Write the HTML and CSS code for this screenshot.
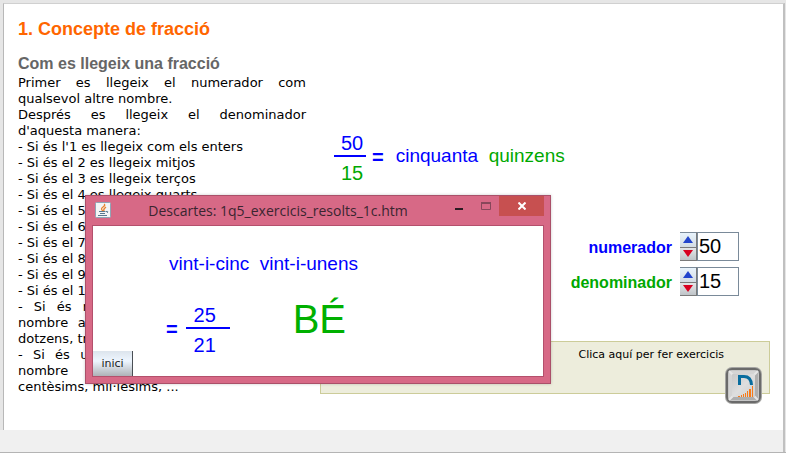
FILE: index.html
```html
<!DOCTYPE html>
<html lang="ca">
<head>
<meta charset="utf-8">
<title>Concepte de fracció</title>
<link rel="stylesheet" href="styles.css">
</head>
<body>
<div class="page">
  <main class="lesson">
    <article class="theory">
      <h1>1. Concepte de fracció</h1>
      <h2>Com es llegeix una fracció</h2>
      <p>Primer es llegeix el numerador com qualsevol altre nombre.</p>
      <p>Després es llegeix el denominador d'aquesta manera:</p>
      <p>- Si és l'1 es llegeix com els enters</p>
      <p>- Si és el 2 es llegeix mitjos</p>
      <p>- Si és el 3 es llegeix terços</p>
      <p>- Si és el 4 es llegeix quarts</p>
      <p>- Si és el 5 es llegeix cinquens</p>
      <p>- Si és el 6 es llegeix sisens</p>
      <p>- Si és el 7 es llegeix setens</p>
      <p>- Si és el 8 es llegeix vuitens</p>
      <p>- Si és el 9 es llegeix novens</p>
      <p>- Si és el 10 es llegeix desens</p>
      <p><span class="line">- Si és més major que 10, es diu el</span> <span class="line">nombre acabat amb «-ens»: els onzens,</span> dotzens, tretzens, ...</p>
      <p><span class="line">- Si és una potència de 10, es diu el</span> <span class="line">nombre acabat en -èsims:</span> centèsims, mil·lèsims, ...</p>
    </article>

    <section class="practice">
      <div class="reading">
        <div class="fraction">
          <span class="num blue">50</span>
          <span class="den green">15</span>
        </div>
        <span class="equals">=</span>
        <span class="words"><span class="blue">cinquanta</span>&nbsp; <span class="green">quinzens</span></span>
      </div>

      <form class="controls">
        <label class="blue" for="numerador">numerador</label>
        <div class="spinner">
          <div class="arrows">
            <button type="button" aria-label="Augmenta el numerador"><svg width="10" height="7" viewBox="0 0 10 7"><path d="M5 0L10 7H0z" fill="#2244cc"/></svg></button>
            <button type="button" aria-label="Disminueix el numerador"><svg width="10" height="7" viewBox="0 0 10 7"><path d="M0 0H10L5 7z" fill="#d80020"/></svg></button>
          </div>
          <input id="numerador" type="text" value="50">
        </div>
        <label class="green" for="denominador">denominador</label>
        <div class="spinner">
          <div class="arrows">
            <button type="button" aria-label="Augmenta el denominador"><svg width="10" height="7" viewBox="0 0 10 7"><path d="M5 0L10 7H0z" fill="#2244cc"/></svg></button>
            <button type="button" aria-label="Disminueix el denominador"><svg width="10" height="7" viewBox="0 0 10 7"><path d="M0 0H10L5 7z" fill="#d80020"/></svg></button>
          </div>
          <input id="denominador" type="text" value="15">
        </div>
      </form>

      <div class="exercises">
        <span id="exercises-text">Clica aquí per fer exercicis</span>
        <button class="launch" type="button" aria-labelledby="exercises-text">
          <svg width="39" height="39" viewBox="0 0 39 39">
            <defs>
              <linearGradient id="face" x1="0" y1="0" x2="1" y2="1"><stop offset="0" stop-color="#c8c8c8"/><stop offset=".5" stop-color="#dedede"/><stop offset="1" stop-color="#cfcfcf"/></linearGradient>
            </defs>
            <rect x="1" y="1" width="37" height="37" rx="7" fill="#a5a5a3"/>
            <rect x="3" y="3" width="33" height="33" rx="5" fill="#c6c6c6" stroke="#6a6a6a" stroke-width="2"/>
            <path d="M5 5H34L31 8H8V31L5 34z" fill="#d4d4d4"/>
            <path d="M34 5V34H5L8 31H31V8z" fill="#aeaeae"/>
            <path d="M5 5L9 9M34 5L30 9M5 34L9 30M34 34L30 30" stroke="#e6e6e6" stroke-width="2"/>
            <rect x="8" y="8" width="23" height="23" rx="1" fill="url(#face)"/>
            <path d="M15.500 19V10.500H20Q27 10.500 27.500 19" fill="none" stroke="#086c9e" stroke-width="3"/>
            <path d="M14 31V30H16V31zM17 31V29H18V31zM19 31V28H20V31zM21 31V27H22V31zM23 31V25H24V31zM25 31V23H27V31zM28 31V20H29V31z" fill="#f77a18"/>
          </svg>
        </button>
      </div>
    </section>
  </main>
  <footer class="status"></footer>

  <section class="dialog" role="dialog" aria-labelledby="dialog-title">
    <header class="titlebar">
      <svg class="java" width="16" height="16" viewBox="0 0 16 16">
        <rect x=".5" y=".5" width="15" height="15" rx="1" fill="#f3f5f6" stroke="#8fa5b5"/>
        <path d="M8 9Q5 7 8 5T9 2M9 9Q8 7 11 5" fill="none" stroke="#e9822d" stroke-width="1.3"/>
        <path d="M4 9.500H10.500M5 11.500H10M3 13.500H12M11 9.500Q14 9 12 11" fill="none" stroke="#59788e"/>
      </svg>
      <span id="dialog-title" class="title">Descartes: 1q5_exercicis_resolts_1c.htm</span>
      <div class="window-buttons">
        <button type="button" aria-label="Minimitza"><svg width="10" height="10" viewBox="0 0 10 10"><path d="M1 7H9V9H1z" fill="#2b1b22"/></svg></button>
        <button type="button" aria-label="Maximitza"><svg width="10" height="8" viewBox="0 0 10 8"><path d="M.5 1H9.500V7.500H.5z" fill="none" stroke="#87475a"/><path d="M0 0H10V2H0z" fill="#87475a"/></svg></button>
        <button class="close" type="button" aria-label="Tanca"><svg width="8" height="8" viewBox="0 0 8 8"><path d="M.5 .5L7.500 7.500M7.500 .5L.5 7.500" stroke="#fff" stroke-width="2"/></svg></button>
      </div>
    </header>
    <div class="canvas">
      <p class="answer blue">vint-i-cinc&nbsp; vint-i-unens</p>
      <div class="result">
        <span class="equals">=</span>
        <div class="fraction wide blue">
          <span class="num">25</span>
          <span class="den">21</span>
        </div>
        <strong class="verdict">BÉ</strong>
      </div>
      <button class="start" type="button">inici</button>
    </div>
  </section>
</div>
</body>
</html>
```
FILE: styles.css
```css
* { box-sizing: border-box; }

body {
  margin: 0;
  background: #e6e6e6;
  color: #000;
  font-family: "DejaVu Sans", Verdana, sans-serif;
  font-size: 13px;
  line-height: 16px;
}

h1, h2, p { margin: 0; }

button {
  padding: 0;
  border: 0;
  font: inherit;
  color: inherit;
}

svg { display: block; }

.blue { color: #0000ff; }
.green { color: #00a800; }

.page {
  position: relative;
  display: flex;
  flex-direction: column;
  min-height: 100vh;
  border-bottom: 1px solid #b4b4b4;
}

.lesson {
  flex: 1;
  display: grid;
  grid-template-columns: 288px 1fr;
  gap: 14px;
  margin: 3px 1px 0 3px;
  padding: 14px 13px 35px 14px;
  background: #fff;
  border-top: 1px solid #d0d0d0;
  border-left: 1px solid #b8b8b8;
  border-right: 2px solid #c0c0c0;
}

.status {
  height: 22px;
  margin-right: 1px;
  background: #f0f0f0;
  border-right: 2px solid #c0c0c0;
}

.theory { text-align: justify; }

h1, h2 {
  font-family: "Liberation Sans", Arial, sans-serif;
  font-weight: bold;
  text-align: left;
  white-space: nowrap;
}

h1 {
  margin-bottom: 15px;
  color: #ff6600;
  font-size: 18px;
  line-height: 22px;
}

h2 {
  margin-bottom: 2px;
  color: #666;
  font-size: 16px;
  line-height: 18px;
}

.line {
  display: block;
  text-align-last: justify;
  white-space: nowrap;
}

.practice {
  display: flex;
  flex-direction: column;
  padding-top: 113px;
}

.reading, .controls, .canvas {
  font-family: "Liberation Sans", Arial, sans-serif;
  font-size: 19px;
}

.reading {
  display: flex;
  align-items: center;
  gap: 6px;
  padding-left: 14px;
}

.words {
  padding: 0 0 4px 6px;
}

.equals {
  padding-bottom: 2px;
  color: #0000ff;
  font-size: 20px;
  font-weight: bold;
}

.fraction {
  width: 32px;
  font-size: 20px;
  line-height: 24px;
  text-align: center;
}

.fraction span { display: block; }

.num {
  padding-left: 4px;
  border-bottom: 2px solid #0000ff;
}

.den {
  padding: 4px 0 0 4px;
}

.wide { width: 44px; }
.wide .num, .wide .den { padding-right: 10px; }

.controls {
  display: grid;
  grid-template-columns: auto auto;
  justify-content: end;
  align-items: center;
  gap: 6px 8px;
  margin: 47px 31px 45px 0;
  font-size: 16px;
  font-weight: bold;
  text-align: right;
}

.controls label { padding-top: 2px; }

.spinner { display: flex; height: 29px; }

.arrows {
  display: grid;
  grid-template-rows: 1fr 1fr;
  width: 17px;
  border-top: 1px solid #7a8a99;
  border-right: 1px solid #7a7a7a;
  border-bottom: 1px solid #7a7a7a;
}

.arrows button {
  display: grid;
  place-items: center;
  background: linear-gradient(#e8f3fc, #d3dce3);
}

.arrows button + button {
  border-top: 1px solid #7a7a7a;
  background: linear-gradient(#e4e6e8, #bfc4c8);
}

.spinner input {
  width: 42px;
  height: 29px;
  padding: 0 1px;
  border: 1px solid #7a8a99;
  background: #fff;
  color: #000;
  font: 20px "Liberation Sans", Arial, sans-serif;
}

.exercises {
  position: relative;
  height: 53px;
  padding: 5px 45px 0 0;
  border: 1px solid #cccc99;
  background: #ededdc;
  font-size: 11px;
  text-align: right;
}

.launch {
  position: absolute;
  right: 6px;
  bottom: -12px;
  background: none;
}

.dialog {
  position: absolute;
  top: 195px;
  left: 85px;
  width: 466px;
  padding: 0 6px 6px;
  border: 1px solid #aa5069;
  background: #d76986;
  box-shadow: 0 0 3px #0003;
}

.titlebar {
  display: flex;
  align-items: flex-start;
  height: 29px;
}

.java { margin: 6px 0 0 3px; }

.title {
  flex: 1;
  padding-top: 6px;
  color: #3a2530;
  font-family: "Open Sans", "Noto Sans", sans-serif;
  font-size: 14px;
  line-height: 18px;
  text-align: center;
  white-space: nowrap;
}

.window-buttons { display: flex; height: 20px; }

.window-buttons button {
  display: grid;
  place-items: center;
  width: 27px;
  background: none;
}

.window-buttons .close {
  width: 45px;
  background: #c75050;
}

.canvas {
  display: flex;
  flex-direction: column;
  height: 152px;
  border: 1px solid #b4506c;
  background: #fff;
}

.answer {
  padding: 26px 0 0 76px;
  line-height: 24px;
}

.result {
  display: flex;
  align-items: center;
  gap: 8px;
  height: 54px;
  margin: 27px 0 -6px;
  padding-left: 73px;
}

.verdict {
  padding: 0 0 22px 55px;
  color: #00b000;
  font-size: 40px;
  font-weight: normal;
  line-height: 32px;
}

.start {
  flex: none;
  width: 40px;
  height: 25px;
  margin-top: auto;
  border-right: 1px solid #4a4f55;
  background: linear-gradient(#dce4ec, #eef6ff 40%, #aeb2b7);
  color: #222;
  font: 11px "DejaVu Sans", sans-serif;
}
```
